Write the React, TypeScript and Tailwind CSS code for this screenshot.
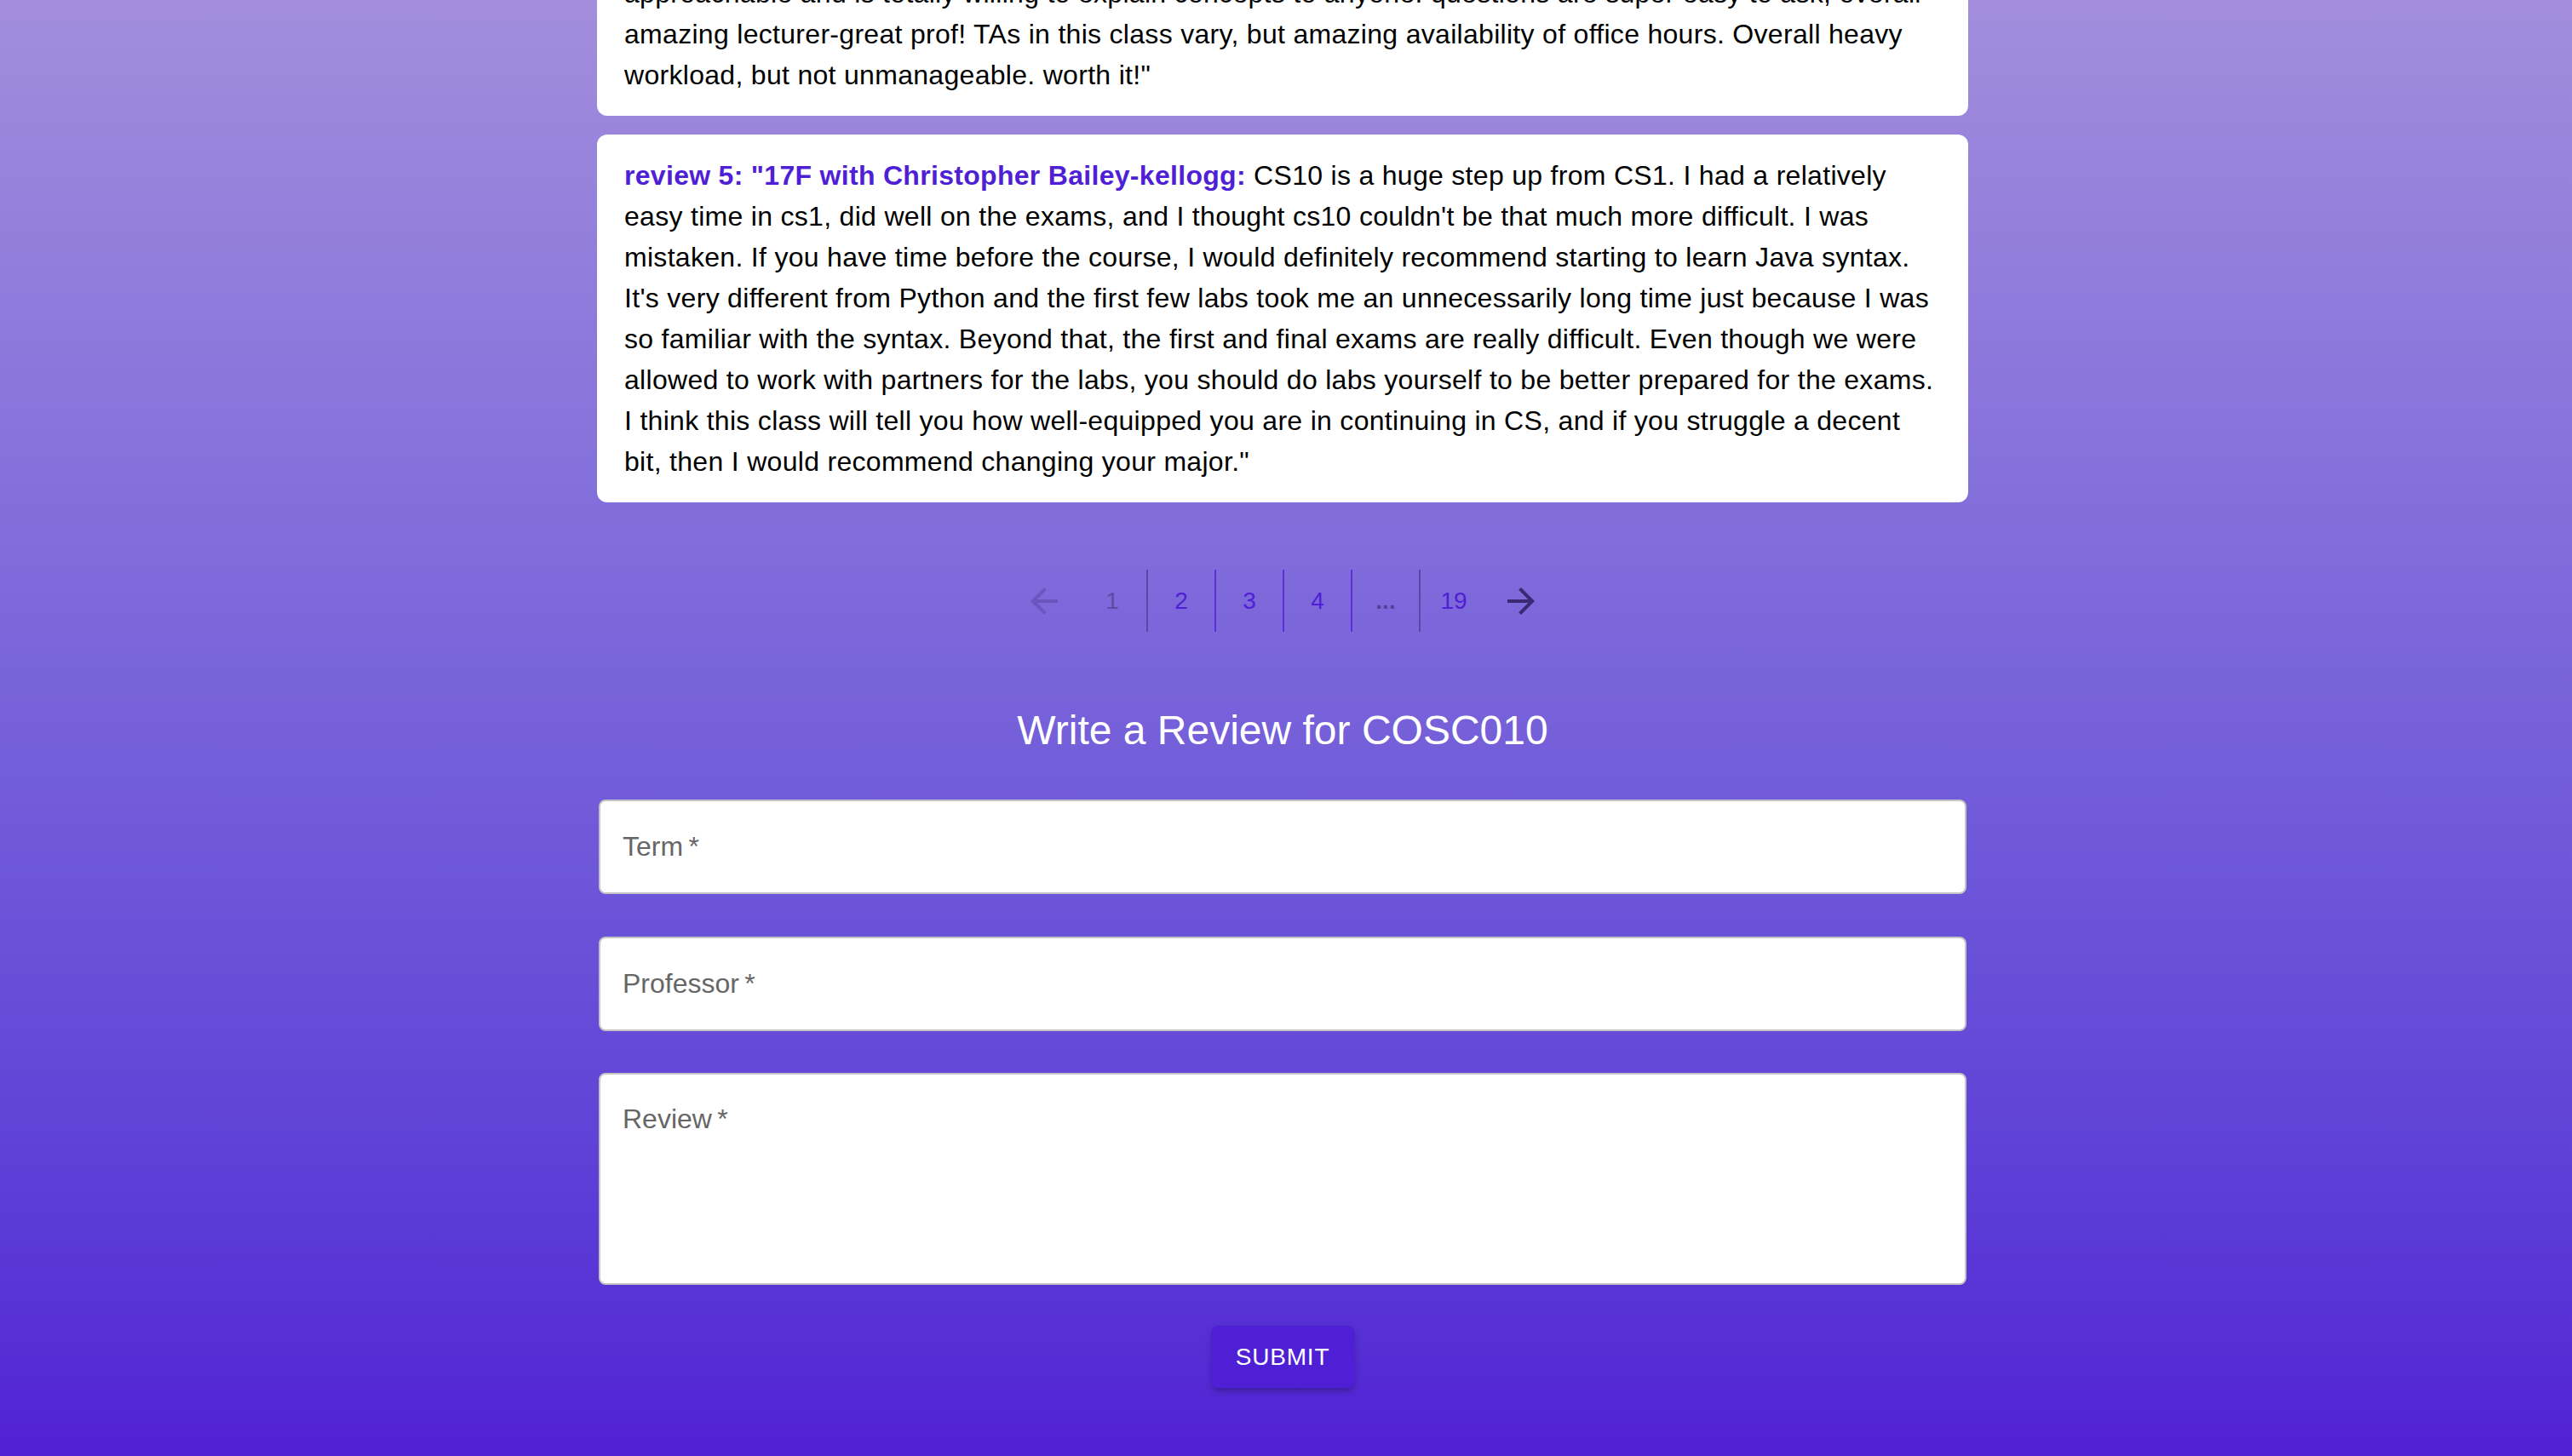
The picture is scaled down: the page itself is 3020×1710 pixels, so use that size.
import { useState } from "react";

// lines are kept as the site wraps them at this width
const reviews = [
  {
    id: 4,
    header: "",
    lines: [
      "approachable and is totally willing to explain concepts to anyone! questions are super easy to ask, overall",
      "amazing lecturer-great prof! TAs in this class vary, but amazing availability of office hours. Overall heavy",
      "workload, but not unmanageable. worth it!\"",
    ],
  },
  {
    id: 5,
    header: "review 5: \"17F with Christopher Bailey-kellogg:",
    lines: [
      "CS10 is a huge step up from CS1. I had a relatively",
      "easy time in cs1, did well on the exams, and I thought cs10 couldn't be that much more difficult. I was",
      "mistaken. If you have time before the course, I would definitely recommend starting to learn Java syntax.",
      "It's very different from Python and the first few labs took me an unnecessarily long time just because I was",
      "so familiar with the syntax. Beyond that, the first and final exams are really difficult. Even though we were",
      "allowed to work with partners for the labs, you should do labs yourself to be better prepared for the exams.",
      "I think this class will tell you how well-equipped you are in continuing in CS, and if you struggle a decent",
      "bit, then I would recommend changing your major.\"",
    ],
  },
];

// pages shown in the pager; border colour is the divider on the cell's left
const pages = [
  { label: "1", text: "text-[#5d4ca4]", border: "border-l-0" },
  { label: "2", text: "text-[#4f1fd6]", border: "border-l-2 border-[#5b47a8]" },
  { label: "3", text: "text-[#4f1fd6]", border: "border-l-2 border-[#5a30d8]" },
  { label: "4", text: "text-[#4f1fd6]", border: "border-l-2 border-[#5a30d8]" },
  { label: "...", text: "text-[#54409c] font-semibold", border: "border-l-2 border-[#5a30d8]" },
  { label: "19", text: "text-[#4f1fd6]", border: "border-l-2 border-[#5b47a8]" },
];

function ReviewCard({ header, lines }: { header: string; lines: string[] }) {
  return (
    <div className="rounded-[12px] bg-white px-8 py-6 text-[32px] leading-[48px] tracking-[0.3px] text-black">
      {lines.map((line, i) => (
        <span key={i} className="block whitespace-nowrap">
          {i === 0 && header && (
            <span className="font-bold text-[#4f1fd6]">{header} </span>
          )}
          {line}
        </span>
      ))}
    </div>
  );
}

export default function App() {
  const [term, setTerm] = useState("");
  const [prof, setProf] = useState("");
  const [review, setReview] = useState("");

  return (
    <div
      className="h-[1710px] w-full overflow-hidden bg-gradient-to-b from-[#a38ddc] to-[#5120d4] pr-2"
      style={{ fontFamily: '"Liberation Sans", Arial, Helvetica, sans-serif' }}
    >
      <div className="mx-auto -mt-[56px] flex w-[1610px] flex-col">
        <ReviewCard header={reviews[0].header} lines={reviews[0].lines} />
        <div className="mt-[22px]">
          <ReviewCard header={reviews[1].header} lines={reviews[1].lines} />
        </div>

        <nav className="mt-[79px] flex justify-center">
          <div className="flex h-[73px] w-[80px] items-center justify-center text-[#6d55c0]">
            <svg width="48" height="48" viewBox="0 0 24 24" fill="currentColor">
              <path d="M20 11H7.83l5.59-5.59L12 4l-8 8 8 8 1.41-1.41L7.83 13H20v-2z" />
            </svg>
          </div>
          {pages.map((p) => (
            <div
              key={p.label}
              className={`flex h-[73px] w-[80px] items-center justify-center text-[28px] ${p.border} ${p.text}`}
            >
              {p.label}
            </div>
          ))}
          <div className="flex h-[73px] w-[80px] items-center justify-center text-[#3b2974]">
            <svg width="48" height="48" viewBox="0 0 24 24" fill="currentColor">
              <path d="M12 4l-1.41 1.41L16.17 11H4v2h12.17l-5.58 5.59L12 20l8-8z" />
            </svg>
          </div>
        </nav>

        <h2 className="mt-[84px] text-center text-[48px] leading-[64px] font-normal text-white">
          Write a Review for COSC010
        </h2>

        <form className="mt-[49px] flex flex-col px-[2px]" onSubmit={(e) => e.preventDefault()}>
          <input
            value={term}
            onChange={(e) => setTerm(e.target.value)}
            placeholder={"Term\u2009*"}
            className="h-[111px] w-full rounded-[8px] border-2 border-[#c4c4c4] bg-white px-[26px] text-[32px] text-black outline-none placeholder:text-[#666666]"
          />
          <input
            value={prof}
            onChange={(e) => setProf(e.target.value)}
            placeholder={"Professor\u2009*"}
            className="mt-[50px] h-[111px] w-full rounded-[8px] border-2 border-[#c4c4c4] bg-white px-[26px] text-[32px] text-black outline-none placeholder:text-[#666666]"
          />
          <textarea
            value={review}
            onChange={(e) => setReview(e.target.value)}
            placeholder={"Review\u2009*"}
            className="mt-[49px] h-[249px] w-full resize-none rounded-[8px] border-2 border-[#c4c4c4] bg-white px-[26px] pt-[28px] text-[32px] leading-[48px] text-black outline-none placeholder:text-[#666666]"
          />
          <div className="mt-[48px] flex justify-center">
            <button
              type="submit"
              className="h-[73px] w-[169px] rounded-[8px] bg-[#4f1fd6] text-[28px] font-medium tracking-[0.8px] text-white uppercase shadow-[0_6px_6px_-3px_rgba(0,0,0,0.2),0_3px_10px_0_rgba(0,0,0,0.12)]"
            >
              Submit
            </button>
          </div>
        </form>
      </div>
    </div>
  );
}
